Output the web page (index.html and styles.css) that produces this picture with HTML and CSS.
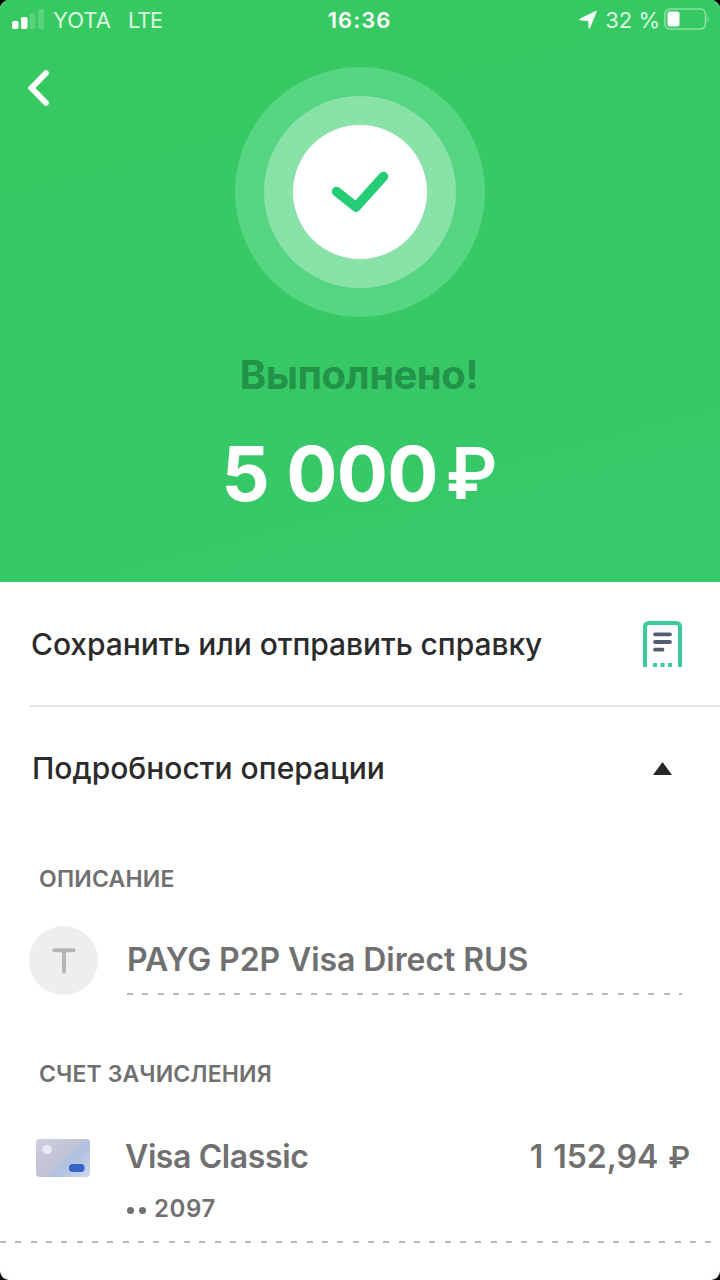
FILE: index.html
```html
<!DOCTYPE html>
<html lang="ru">
<head>
<meta charset="utf-8">
<title>Выполнено</title>
<link rel="stylesheet" href="styles.css">
</head>
<body>
<main class="screen">
  <section class="hero">
    <header class="status">
      <div class="status-left">
        <svg class="signal" width="33" height="20" viewBox="0 0 33 20" fill="#fff">
          <rect x="0" y="12" width="6.5" height="8" rx="1.8"/>
          <rect x="9" y="8" width="6.5" height="12" rx="1.8"/>
          <rect x="17.500" y="4" width="6" height="16" rx="1.800" opacity=".18"/>
          <rect x="26" y="0" width="6" height="20" rx="1.8" opacity=".18"/>
        </svg>
        <span class="carrier">YOTA</span>
        <span class="network">LTE</span>
      </div>
      <span class="clock">16:36</span>
      <div class="status-right">
        <svg class="location" width="18" height="18" viewBox="0 0 18 18"><path d="M17.600 1 L11 17 Q10 18.800 9.500 16.500 L9.200 10 L1.500 9.500 Q-.7 8.700 1.200 7.600 L16 .2 Q18.500 -.6 17.600 1Z" fill="#fff"/></svg>
        <span class="percent">32 %</span>
        <svg class="battery" width="46" height="22" viewBox="0 0 46 22">
          <rect x="1" y="1" width="40.500" height="20" rx="5" fill="none" stroke="#fff" stroke-opacity=".42" stroke-width="1.700"/>
          <rect x="3.500" y="3.500" width="12" height="15" rx="2.500" fill="#fff"/>
          <path d="M43.500 7.500 Q45.500 11 43.500 14.500Z" fill="#fff" opacity=".5"/>
        </svg>
      </div>
    </header>
    <nav class="nav">
      <svg class="back" width="24" height="38" viewBox="0 0 24 38"><path d="M19 4 L4.500 19 L19 34" fill="none" stroke="#fff" stroke-width="5.800" stroke-linecap="round" stroke-linejoin="miter"/></svg>
    </nav>
    <svg class="badge" width="250" height="250" viewBox="0 0 250 250">
      <circle cx="125" cy="125" r="125" fill="#55d682"/>
      <circle cx="125" cy="125" r="96" fill="#89e3a8"/>
      <circle cx="125" cy="125" r="67" fill="#fff"/>
      <path d="M101.500 124.500 L121 140 L148.500 109.500" fill="none" stroke="#24cc75" stroke-width="9.500" stroke-linecap="round" stroke-linejoin="round"/>
    </svg>
    <h1 class="result">Выполнено!</h1>
    <p class="amount"><span class="number">5 000</span><span class="ruble">₽</span></p>
  </section>

  <section class="row save">
    <span class="save-text">Сохранить или отправить справку</span>
    <svg class="receipt" width="39" height="46" viewBox="0 0 39 46">
      <path d="M2 46 V6 Q2 2 6 2 H33 Q37 2 37 6 V46" fill="none" stroke="#3ccb9a" stroke-width="4"/>
      <path d="M12 13.300 H27 M12 21 H27 M12 28.700 H19.500" stroke="#525d75" stroke-width="3.800" stroke-linecap="round"/>
      <path d="M10 44 H14 M17.500 44 H21.500 M25 44 H29" stroke="#3ccb9a" stroke-width="4"/>
    </svg>
  </section>

  <section class="row details">
    <span class="details-text">Подробности операции</span>
    <svg class="arrow" width="19" height="13" viewBox="0 0 19 13"><path d="M9.500 0 L19 13 H0Z" fill="#262626"/></svg>
  </section>

  <h2 class="label label-description">ОПИСАНИЕ</h2>
  <section class="payee">
    <div class="avatar">
      <svg width="24" height="26" viewBox="0 0 24 26"><path d="M2.200 2.200 H21.500 M12 2.200 V23.500" fill="none" stroke="#b5b5b5" stroke-width="4" stroke-linecap="round"/></svg>
    </div>
    <div class="payee-body">
      <span class="payee-name">PAYG P2P Visa Direct RUS</span>
      <div class="dashes"></div>
    </div>
  </section>

  <h2 class="label label-account">СЧЕТ ЗАЧИСЛЕНИЯ</h2>
  <section class="account">
    <svg class="card" width="54" height="38" viewBox="0 0 54 38">
      <defs>
        <linearGradient id="base" x1="0" y1="0" x2="1" y2="1"><stop offset="0" stop-color="#ced0df"/><stop offset=".5" stop-color="#c0c2d5"/><stop offset="1" stop-color="#c5cbe0"/></linearGradient>
        <linearGradient id="shine" x1="0" y1="0" x2="1" y2="1"><stop offset="0" stop-color="#bcc8df"/><stop offset=".6" stop-color="#adc1e1"/><stop offset="1" stop-color="#d2dcf0"/></linearGradient>
        <clipPath id="card-shape"><rect width="54" height="38" rx="4"/></clipPath>
      </defs>
      <g clip-path="url(#card-shape)">
        <rect width="54" height="38" fill="url(#base)"/>
        <path d="M49 0 H54 V38 H9Z" fill="url(#shine)" opacity=".8"/>
      </g>
      <circle cx="11" cy="10.500" r="4.700" fill="#e9e9f4"/>
      <rect x="33" y="25" width="15.500" height="8" rx="3.500" fill="#3664c6"/>
    </svg>
    <div class="account-body">
      <div class="account-line">
        <span class="account-name">Visa Classic</span>
        <span class="balance">1 152,94 <span class="currency">₽</span></span>
      </div>
      <div class="account-number"><i class="dot"></i><i class="dot"></i><span class="digits">2097</span></div>
    </div>
  </section>
  <div class="dashes dashes-full"></div>
</main>
</body>
</html>
```
FILE: styles.css
```css
* { box-sizing: border-box; margin: 0; padding: 0; }
html { background: #000; }
body { width: 720px; height: 1280px; background: #000; font-family: Inter, "Liberation Sans", sans-serif; overflow: hidden; }
svg { display: block; flex: none; }
span, h1, h2, p { white-space: nowrap; }

.screen { width: 720px; height: 1280px; background: #fff; border-radius: 9px; overflow: hidden; display: flex; flex-direction: column; }

.hero { height: 582px; flex: none; background: linear-gradient(165deg, #36c960, #37c86a); color: #fff; display: flex; flex-direction: column; align-items: center; }
.status { width: 720px; height: 40px; flex: none; display: grid; grid-template-columns: 1fr auto 1fr; align-items: center; padding: 0 10px 0 12px; font-size: 22px; line-height: 40px; }
.status-left, .status-right { display: flex; align-items: center; }
.status-left { color: #dcf8e3; }
.signal { margin-top: -2px; margin-right: 8px; }
.carrier { margin-right: 17px; }
.network { letter-spacing: -1.2px; }
.status-right { justify-content: flex-end; color: #dcf8e3; }
.clock { font-weight: 600; letter-spacing: 1px; margin-left: -3px; }
.location { margin-right: 8px; }
.percent { margin-right: 4px; }
.battery { margin-top: -2px; }
.nav { width: 100%; height: 27px; flex: none; padding: 29px 0 0 27px; }
.badge { margin-bottom: 32px; }
.result { height: 52px; font-size: 40px; line-height: 52px; font-weight: 700; letter-spacing: -.5px; color: #23934a; margin: 0 2px 27px 0; }
.amount { height: 90px; margin-right: 5px; display: flex; font-size: 76px; line-height: 90px; font-weight: 700; }
.number { letter-spacing: -.8px; }
.ruble { margin-left: 8px; font-size: 71px; font-weight: 600; width: 48px; }

.nav + .badge { margin-top: -2px; }
.badge + .result { margin-top: 0; }

.row { flex: none; display: flex; align-items: center; justify-content: space-between; margin-left: 29px; padding-left: 2px; font-size: 30px; font-weight: 500; color: #2b2b2b; }
.save { height: 125px; border-bottom: 2px solid #e6e6e6; padding-right: 38px; }
.save-text { letter-spacing: -.07px; }
.details { height: 124px; padding: 0 48px 2px 3px; }

.label { flex: none; height: 30px; margin-left: 39px; font-size: 23px; line-height: 30px; font-weight: 600; letter-spacing: .2px; color: #707070; }
.label-description { margin-top: 33px; }
.label-account { margin-top: 63px; letter-spacing: .13px; }

.payee { flex: none; height: 70px; margin: 32px 38px 0 29px; display: flex; align-items: stretch; }
.avatar { width: 69px; height: 69px; border-radius: 50%; background: #eeeeee; display: flex; align-items: center; justify-content: center; margin-right: 29px; }
.payee-body { flex: 1; display: flex; flex-direction: column; }
.payee-name { font-size: 32px; line-height: 67px; height: 67px; font-weight: 600; letter-spacing: -.08px; color: #707070; }
.dashes { flex: none; height: 2px; background: repeating-linear-gradient(90deg, #b9b9b9 0 6px, transparent 6px 15.33px); }

.account { flex: none; height: 86px; margin-top: 50px; padding: 0 30px 0 36px; display: flex; }
.card { margin-right: 35px; }
.account-body { flex: 1; }
.account-line { height: 35px; line-height: 35px; display: flex; justify-content: space-between; font-size: 32px; font-weight: 600; letter-spacing: -.4px; color: #707070; }
.balance { letter-spacing: -.05px; word-spacing: 2px; }
.currency { font-size: 30px; }
.account-number { height: 32px; margin-top: 19px; padding-left: 2px; display: flex; align-items: center; gap: 4px; font-size: 24px; line-height: 32px; font-weight: 600; color: #707070; }
.dot { width: 7px; height: 7px; margin-top: 3px; border-radius: 50%; background: #707070; }
.dot + .dot { margin-left: 1px; }
.digits { margin-left: 4px; letter-spacing: .6px; }
.dashes-full { margin-top: 16px; }
```
